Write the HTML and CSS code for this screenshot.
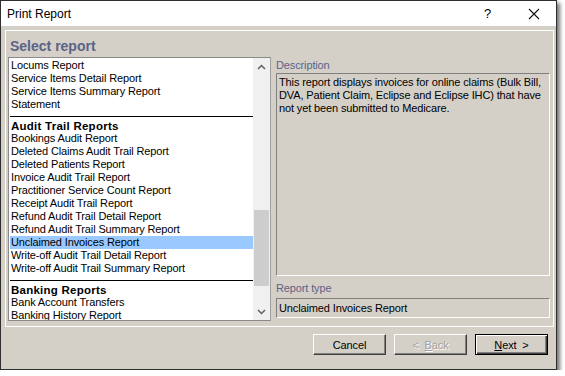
FILE: index.html
```html
<!DOCTYPE html>
<html lang="en">

<head>
    <meta charset="utf-8">
    <title>Print Report</title>
    <link rel="stylesheet" href="styles.css">
</head>

<body>
    <div class="dialog">
        <div class="titlebar">
            <span class="title">Print Report</span>
            <span class="help">?</span>
            <span class="close">
                <svg width="12" height="12" viewBox="0 0 12 12">
                    <path d="M1 1 L11 11 M11 1 L1 11" stroke="#111" stroke-width="1.1" fill="none" />
                </svg>
            </span>
        </div>

        <div class="frame">
            <div class="heading">Select report</div>
            <div class="cols">
                <div class="listbox">
                    <ul class="list">
                        <li>Locums Report</li>
                        <li>Service Items Detail Report</li>
                        <li>Service Items Summary Report</li>
                        <li>Statement</li>
                        <li class="group">Audit Trail Reports</li>
                        <li>Bookings Audit Report</li>
                        <li>Deleted Claims Audit Trail Report</li>
                        <li>Deleted Patients Report</li>
                        <li>Invoice Audit Trail Report</li>
                        <li>Practitioner Service Count Report</li>
                        <li>Receipt Audit Trail Report</li>
                        <li>Refund Audit Trail Detail Report</li>
                        <li>Refund Audit Trail Summary Report</li>
                        <li class="sel">Unclaimed Invoices Report</li>
                        <li>Write-off Audit Trail Detail Report</li>
                        <li>Write-off Audit Trail Summary Report</li>
                        <li class="group">Banking Reports</li>
                        <li>Bank Account Transfers</li>
                        <li>Banking History Report</li>
                    </ul>
                    <div class="scrollbar">
                        <span class="arrow">
                            <svg width="9" height="6" viewBox="0 0 9 6">
                                <path d="M1 5 L4.5 1.5 L8 5" stroke="#606060" stroke-width="1.5" fill="none" />
                            </svg>
                        </span>
                        <div class="track">
                            <div class="thumb"></div>
                        </div>
                        <span class="arrow">
                            <svg width="9" height="6" viewBox="0 0 9 6">
                                <path d="M1 1 L4.5 4.5 L8 1" stroke="#606060" stroke-width="1.5" fill="none" />
                            </svg>
                        </span>
                    </div>
                </div>

                <div class="side">
                    <div class="label">Description</div>
                    <div class="box desc">This report displays invoices for online claims (Bulk Bill,<br>DVA, Patient Claim, Eclipse and Eclipse IHC) that have<br>not yet been submitted to Medicare.</div>
                    <div class="label type">Report type</div>
                    <div class="box field">Unclaimed Invoices Report</div>
                </div>
            </div>
        </div>

        <div class="buttons">
            <span class="btn">Cancel</span>
            <span class="btn off">&lt; &nbsp;<u>B</u>ack</span>
            <span class="btn def"><u>N</u>ext &nbsp;&gt;</span>
        </div>
    </div>
</body>

</html>
```

FILE: styles.css
```css
* {
    padding: 0;
    margin: 0;
    box-sizing: border-box;
}

html,
body {
    background: #fff;
    font-family: "Liberation Sans", "DejaVu Sans", sans-serif;
    font-size: 11px;
    letter-spacing: -0.13px;
    color: #000;
}

ul,
li {
    list-style: none;
}

.dialog {
    width: 557px;
    height: 370px;
    border: 1px solid #2e2e2e;
    background: #d4d0c8;
    box-shadow: 3px 3px 4px rgba(0, 0, 0, 0.55);
}

.titlebar {
    height: 25px;
    background: #fff;
    display: flex;
    align-items: center;
    padding-left: 6px;
    font-size: 12px;
    letter-spacing: 0;
}

.titlebar .title {
    flex: 1;
}

.titlebar .help {
    width: 14px;
    margin-right: 30px;
    font-size: 13px;
}

.titlebar .close {
    width: 12px;
    height: 12px;
    margin-right: 16px;
    display: flex;
}

.frame {
    margin: 4px 2px 0 4px;
    height: 297px;
    border: 1px solid #fff;
    padding: 0 3px 0 2px;
}

.heading {
    height: 26px;
    padding: 7px 0 0 2px;
    font-size: 14px;
    font-weight: bold;
    letter-spacing: 0;
    color: #5b6386;
}

.cols {
    display: flex;
    gap: 5px;
}

/* list with scrollbar */
.listbox {
    width: 263px;
    height: 264px;
    border: 1px solid #8a8a8a;
    border-right-color: #a0a0a0;
    background: #fff;
    display: flex;
    overflow: hidden;
}

.list {
    flex: 1;
    padding: 1px 0 0 1px;
    overflow: hidden;
}

.list li {
    height: 13px;
    line-height: 13px;
    padding-left: 1px;
    white-space: nowrap;
}

.list li.group {
    font-weight: bold;
    font-size: 11.5px;
    letter-spacing: 0.25px;
    border-top: 1px solid #000;
    margin-top: 5px;
    height: 16px;
    padding-top: 2px;
    line-height: 14px;
}

.list li.sel {
    background: #99c9ff;
}

.scrollbar {
    width: 17px;
    background: #f0f0f0;
    display: flex;
    flex-direction: column;
}

.scrollbar .arrow {
    height: 17px;
    display: flex;
    align-items: center;
    justify-content: center;
}

.scrollbar .track {
    flex: 1;
    padding: 135px 1px 0 1px;
}

.scrollbar .thumb {
    height: 76px;
    background: #cdcdcd;
}

/* right side */
.side {
    width: 274px;
}

.label {
    height: 16px;
    line-height: 16px;
    color: #5b6386;
}

.label.type {
    height: 22px;
    line-height: 20px;
    padding-top: 2px;
}

.box {
    border: 1px solid #fff;
    border-top-color: #808080;
    border-left-color: #808080;
    line-height: 13px;
    padding: 2px 2px;
    white-space: nowrap;
    overflow: hidden;
}

.desc {
    height: 203px;
}

.field {
    height: 20px;
    padding-top: 3px;
}

/* dialog buttons */
.buttons {
    display: flex;
    justify-content: flex-end;
    gap: 8px;
    padding: 7px 8px 0 0;
}

.btn {
    width: 73px;
    height: 21px;
    display: flex;
    align-items: center;
    justify-content: center;
    border: 1px solid #fff;
    border-right-color: #404040;
    border-bottom-color: #404040;
    box-shadow: inset -1px -1px 0 #808080;
}

.btn.off {
    color: #a0a0a0;
    text-shadow: 1px 1px 0 #fff;
}

.btn.def {
    border: 1px solid #000;
    box-shadow: inset 1px 1px 0 #fff, inset -1px -1px 0 #404040, inset -2px -2px 0 #808080;
}
```
